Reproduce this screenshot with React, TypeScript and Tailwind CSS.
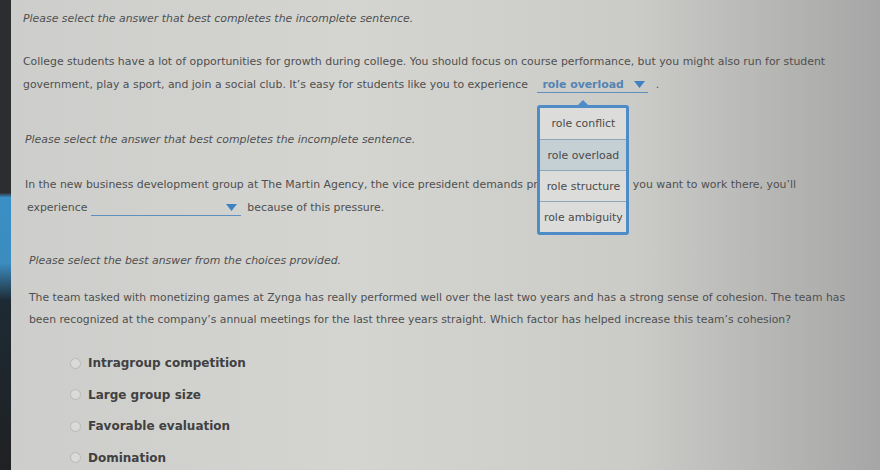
import React from 'react';

const Caret = () => (
  <svg width="11" height="7" viewBox="0 0 11 7" className="shrink-0">
    <path d="M0 0H11L5.5 7Z" fill="#3f82c2" />
  </svg>
);

const options = ['role conflict', 'role overload', 'role structure', 'role ambiguity'];

// open dropdown with the list hanging below it
const OpenSelect = () => (
  <span className="relative ml-[6px] inline-flex w-[111px] items-center justify-between border-b border-[#5d8fbf] pl-[5px] pr-[3px] leading-[15px] align-baseline">
    <span className="font-bold text-[#5384b3]">role overload</span>
    <Caret />
    <div className="absolute left-0 top-[calc(100%+13px)] z-10 w-[92px] rounded-[3px] border-[3px] border-[#4d8cc6] bg-[#dcdddb] text-center text-[#4a4a4a]">
      <div className="absolute -top-[8px] left-1/2 h-0 w-0 -translate-x-1/2 border-x-[6px] border-b-[6px] border-x-transparent border-b-[#4d8cc6]" />
      {options.map((o, i) => (
        <div
          key={o}
          className={
            'flex h-[31px] items-center justify-center ' +
            (i > 0 ? 'border-t border-[#8fa6b9] ' : '') +
            (o === 'role overload' ? 'bg-[#c5d0d5]' : '')
          }
        >
          {o}
        </div>
      ))}
    </div>
  </span>
);

const EmptySelect = () => (
  <span className="inline-flex h-[15px] w-[150px] items-center justify-end border-b border-[#5d8fbf] pr-[4px] align-baseline">
    <Caret />
  </span>
);

const Radio = ({ label }: { label: string }) => (
  <label className="flex items-center gap-[7px] leading-[20px]">
    <span className="h-[11px] w-[11px] rounded-full border border-[#b9bab7] bg-[#dadbd8]" />
    <span className="text-[12px] font-bold text-[#414141]">{label}</span>
  </label>
);

const App = () => {
  return (
    <div
      className="flex h-[470px] w-[880px] overflow-hidden bg-[linear-gradient(90deg,#cdcecb_0%,#d4d5d1_40%,#cbccc8_72%,#a6a6a6_100%)] text-[10.9px] text-[#4f4f4f]"
      style={{ fontFamily: '"DejaVu Sans", Verdana, sans-serif' }}
    >
      {/* edge of the monitor */}
      <div className="w-[11px] shrink-0 bg-[linear-gradient(180deg,#2c2d2f_0%,#2c2d2f_41%,#3a8fc4_42%,#3b8cbf_56%,#1d2a33_64%,#202123_100%)]" />

      <div className="flex-1">
        <section className="pl-[12px]">
          <p className="mt-[9px] italic leading-[20px]">
            Please select the answer that best completes the incomplete sentence.
          </p>
          <p className="mt-[21px] leading-[23px]">
            College students have a lot of opportunities for growth during college. You should focus on course performance, but you might also run for student
            <br />
            government, play a sport, and join a social club. It’s easy for students like you to experience <OpenSelect /> <span className="ml-[4px]">.</span>
          </p>
        </section>

        <section className="pl-[14px]">
          <p className="mt-[34px] italic leading-[20px]">
            Please select the answer that best completes the incomplete sentence.
          </p>
          <p className="mt-[23px] leading-[23px]">
            In the new business development group at The Martin Agency, the vice president demands pr
            <span className="inline-block w-[95px]" />
            you want to work there, you’ll
            <br />
            <span className="ml-[2px]">experience</span> <EmptySelect /> <span className="ml-[3px]">because of this pressure.</span>
          </p>
        </section>

        <section className="pl-[18px]">
          <p className="mt-[32px] italic leading-[20px]">
            Please select the best answer from the choices provided.
          </p>
          <p className="mt-[16px] leading-[22px] text-[10.8px]">
            The team tasked with monetizing games at Zynga has really performed well over the last two years and has a strong sense of cohesion. The team has
            <br />
            been recognized at the company’s annual meetings for the last three years straight. Which factor has helped increase this team’s cohesion?
          </p>
          <div className="mt-[22px] flex flex-col gap-[11.6px] pl-[41px]">
            <Radio label="Intragroup competition" />
            <Radio label="Large group size" />
            <Radio label="Favorable evaluation" />
            <Radio label="Domination" />
          </div>
        </section>
      </div>
    </div>
  );
};

export default App;
